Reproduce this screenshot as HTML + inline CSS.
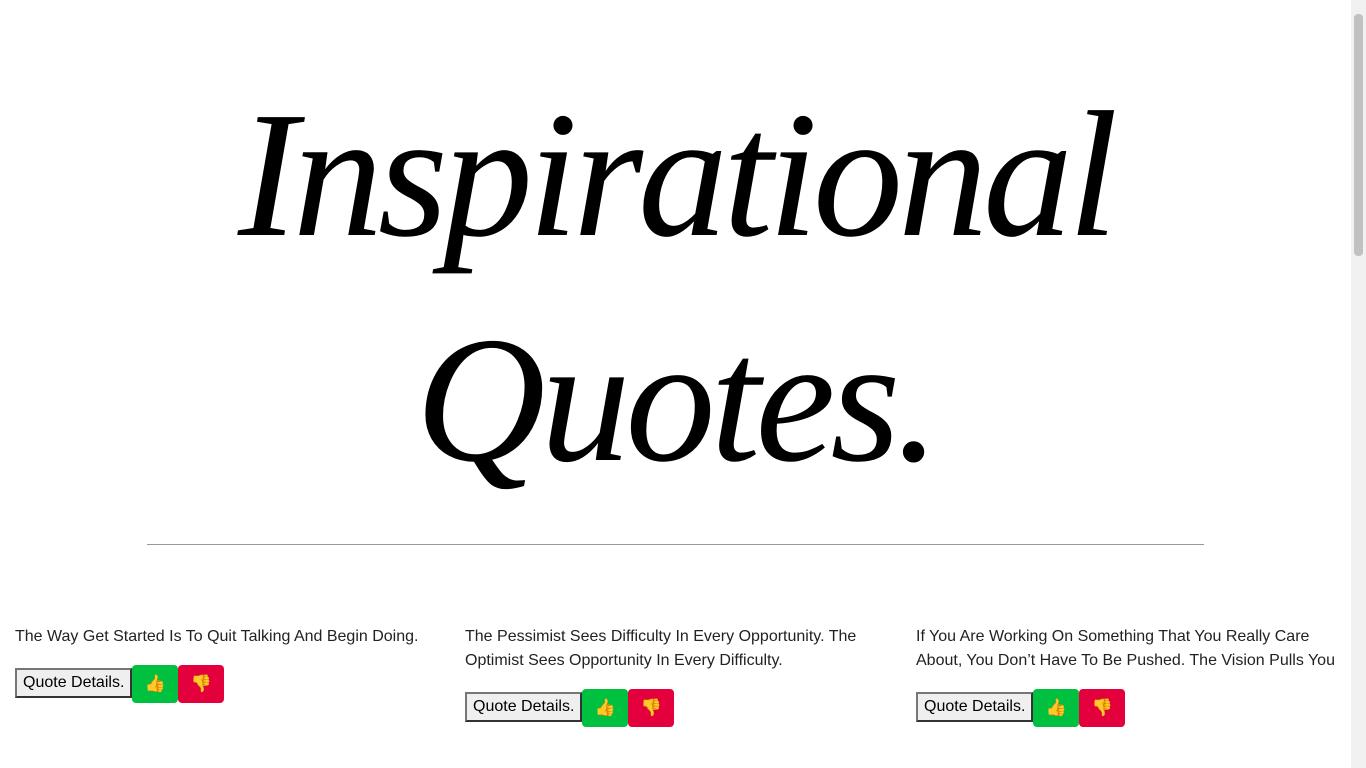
<!DOCTYPE html>
<html><head><meta charset="utf-8"><style>
html,body{margin:0;padding:0;background:#fff;overflow:hidden}
body{width:1366px;height:768px;position:relative;font-family:"Liberation Sans",sans-serif;color:#222}
.sb{position:absolute;right:0;top:0;width:15px;height:768px;background:#f1f1f1}
.sb div{position:absolute;left:3px;top:14px;width:9px;height:242px;background:#c1c1c1;border-radius:4px}
.t{position:absolute;left:0;width:1351px;text-align:center;font-family:"Liberation Serif",serif;font-style:italic;font-weight:normal;color:#000;line-height:1}
.hr{position:absolute;left:147px;top:544px;width:1057px;height:1px;background:#999}
.col{position:absolute;top:625px;width:430px;font-size:16px;line-height:24px}
.row{margin-top:16px;display:flex;align-items:flex-start}
.qd{margin-top:3px;height:30px;box-sizing:border-box;border:2px solid #333;border-color:#767676 #333 #333 #767676;background:#efefef;font-size:16px;padding:0 6px;line-height:26px;color:#000}
.b{width:46px;height:38px;border-radius:4px;display:flex;align-items:center;justify-content:center;font-size:17px}
.g{background:#00c040}.r{background:#e4003c}
</style></head><body>
<div class="t" style="top:85px;font-size:180px;letter-spacing:-5px">Inspirational</div>
<div class="t" style="top:310px;font-size:180px;letter-spacing:-5px">Quotes.</div>
<div class="hr"></div>
<div class="col" style="left:15px">The Way Get Started Is To Quit Talking And Begin Doing.
<div class="row"><span class="qd">Quote Details.</span><span class="b g">👍</span><span class="b r">👎</span></div></div>
<div class="col" style="left:465px">The Pessimist Sees Difficulty In Every Opportunity. The Optimist Sees Opportunity In Every Difficulty.
<div class="row"><span class="qd">Quote Details.</span><span class="b g">👍</span><span class="b r">👎</span></div></div>
<div class="col" style="left:916px;width:425px">If You Are Working On Something That You Really Care About, You Don’t Have To Be Pushed. The Vision Pulls You
<div class="row"><span class="qd">Quote Details.</span><span class="b g">👍</span><span class="b r">👎</span></div></div>
<div class="sb"><div></div></div>
</body></html>
